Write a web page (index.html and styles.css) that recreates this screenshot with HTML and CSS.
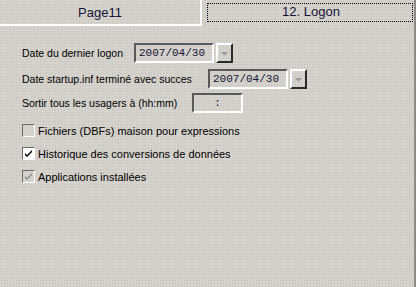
FILE: index.html
```html
<!DOCTYPE html>
<html lang="fr">
<head>
    <meta charset="UTF-8">
    <title>12. Logon</title>
    <link rel="stylesheet" href="styles.css">
</head>
<body>
    <div class="window">
        <div class="tabs">
            <div class="tab">Page11</div>
            <div class="tab tab-active"><span class="focus">12. Logon</span></div>
        </div>

        <div class="form">
            <div class="row row-first">
                <span class="label label-logon">Date du dernier logon</span>
                <div class="combo">
                    <span class="field date">2007/04/30</span>
                    <span class="drop"><svg width="9" height="5" viewBox="0 0 9 5"><path d="M1 1h7L4.5 4.5z" fill="#9a9a9a"/></svg></span>
                </div>
            </div>
            <div class="row">
                <span class="label label-startup">Date startup.inf terminé avec succes</span>
                <div class="combo">
                    <span class="field date">2007/04/30</span>
                    <span class="drop"><svg width="9" height="5" viewBox="0 0 9 5"><path d="M1 1h7L4.5 4.5z" fill="#9a9a9a"/></svg></span>
                </div>
            </div>
            <div class="row">
                <span class="label label-exit">Sortir tous les usagers à (hh:mm)</span>
                <span class="field time">:</span>
            </div>

            <label class="check check-first">
                <span class="box box-disabled"></span>
                Fichiers (DBFs) maison pour expressions
            </label>
            <label class="check">
                <span class="box"><svg width="9" height="9" viewBox="0 0 9 9"><path d="M1 4l2 2 5-5v2L3 8 1 6z" fill="#000"/></svg></span>
                Historique des conversions de données
            </label>
            <label class="check">
                <span class="box box-disabled"><svg width="9" height="9" viewBox="0 0 9 9"><path d="M1 4l2 2 5-5v2L3 8 1 6z" fill="#8a8a8a"/></svg></span>
                Applications installées
            </label>
        </div>
    </div>
</body>
</html>
```

FILE: styles.css
```css
body {
    margin: 0;
    background-color: #d5d1cb;
    font-family: 'Liberation Sans', Arial, sans-serif;
    font-size: 11px;
    color: #000;
}

.window {
    width: 416px;
    height: 287px;
    box-sizing: border-box;
    border-right: 2px solid #8c8a86;
    background-color: #d5d1cb;
    background-image: radial-gradient(#c4bfb8 0.6px, transparent 0.9px);
    background-size: 3px 3px;
}

.tabs {
    display: flex;
    height: 26px;
}

.tab {
    width: 202px;
    box-sizing: border-box;
    border-right: 2px solid #fff;
    border-bottom: 2px solid #fff;
    font-size: 13px;
    text-align: center;
    line-height: 26px;
    color: #14143a;
}

.tab-active {
    flex: 1;
    border: none;
    padding: 3px 1px 4px 5px;
    line-height: normal;
}

.focus {
    display: block;
    height: 100%;
    box-sizing: border-box;
    border: 1px dotted #000;
    line-height: 15px;
    padding-left: 2px;
}

.form {
    padding-left: 22px;
}

.row {
    display: flex;
    align-items: center;
    height: 20px;
    margin-top: 6px;
}

.row-first {
    margin-top: 17px;
}

.row + .row + .row {
    margin-top: 4px;
}

.label {
    font-size: 10.5px;
}

.label-logon {
    width: 112px;
}

.label-startup {
    width: 186px;
}

.label-exit {
    width: 170px;
}

.combo {
    display: flex;
    gap: 2px;
}

.field {
    display: block;
    height: 20px;
    box-sizing: border-box;
    border-top: 2px solid #5a5a5a;
    border-left: 2px solid #5a5a5a;
    border-right: 2px solid #fff;
    border-bottom: 2px solid #fff;
    font-family: 'Liberation Mono', 'Courier New', monospace;
    font-size: 11px;
    line-height: 16px;
    color: #14143a;
}

.date {
    width: 80px;
    padding-left: 3px;
}

.time {
    width: 51px;
    text-align: center;
}

.drop {
    display: flex;
    align-items: center;
    justify-content: center;
    width: 17px;
    height: 20px;
    box-sizing: border-box;
    border-top: 2px solid #fff;
    border-left: 2px solid #fff;
    border-right: 2px solid #2a2a2a;
    border-bottom: 2px solid #2a2a2a;
}

.check {
    display: flex;
    align-items: center;
    gap: 3px;
    height: 13px;
    margin-top: 10px;
}

.check-first {
    margin-top: 11px;
}

.box {
    display: flex;
    align-items: center;
    justify-content: center;
    width: 13px;
    height: 13px;
    box-sizing: border-box;
    border-top: 1px solid #6a6a6a;
    border-left: 1px solid #6a6a6a;
    border-right: 1px solid #fff;
    border-bottom: 1px solid #fff;
    background-color: #fff;
}

.box-disabled {
    background-color: #d5d1cb;
}
```
